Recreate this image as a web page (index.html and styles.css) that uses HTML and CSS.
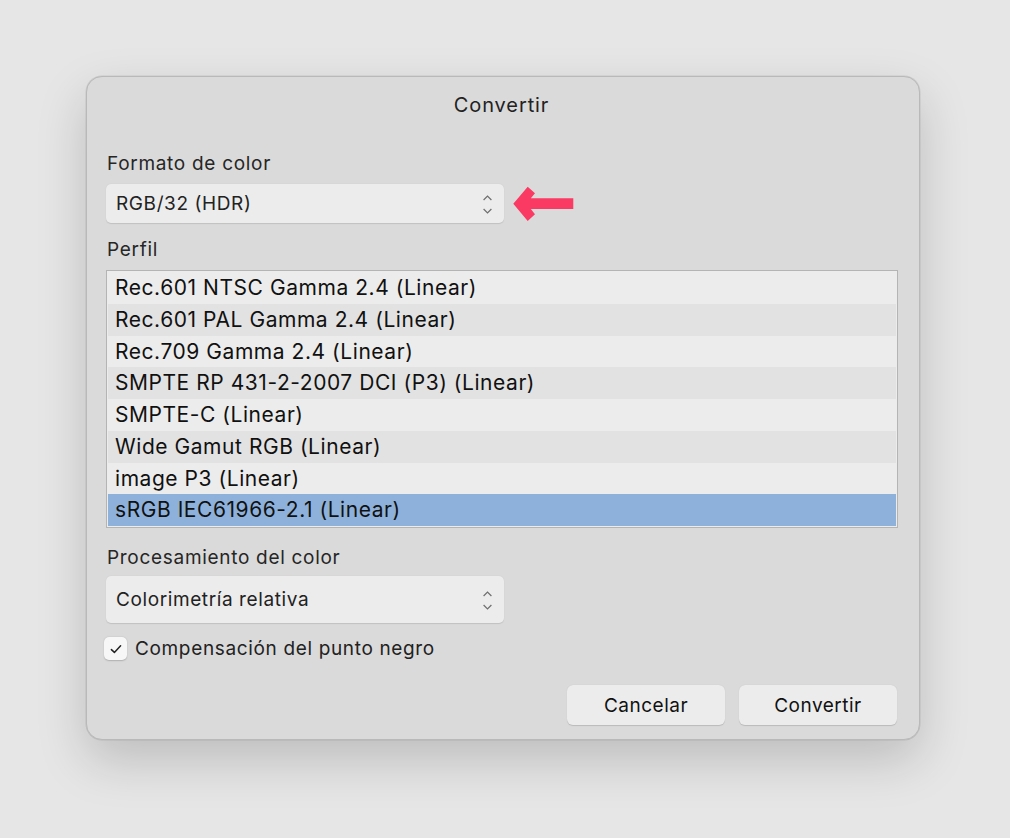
FILE: index.html
```html
<!DOCTYPE html>
<html lang="es">
<head>
  <meta charset="UTF-8">
  <title>Convertir</title>
  <link rel="stylesheet" href="styles.css">
</head>
<body>

  <div class="dialog">
    <h1 class="dialog-title">Convertir</h1>

    <div class="field-label">Formato de color</div>
    <div class="select-row">
      <div class="select">
        <span>RGB/32 (HDR)</span>
        <svg class="select-arrows" viewBox="0 0 9 19" width="9" height="19">
          <path d="M0.6 5 L4.5 1 L8.4 5 M0.6 14 L4.5 18 L8.4 14" fill="none" stroke="#6e6e6e" stroke-width="1.2"/>
        </svg>
      </div>
      <svg class="pointer" viewBox="0 0 64 38" width="64" height="38">
        <path d="M2.3 18.7 L16.7 1.7 L24 8.3 L19.8 13.3 L62.3 13.3 L62.3 24 L19.8 24 L24 29.3 L16.7 36 Z" fill="#fb3a64"/>
      </svg>
    </div>

    <div class="field-label label-list">Perfil</div>
    <ul class="profile-list">
      <li>Rec.601 NTSC Gamma 2.4 (Linear)</li>
      <li>Rec.601 PAL Gamma 2.4 (Linear)</li>
      <li>Rec.709 Gamma 2.4 (Linear)</li>
      <li>SMPTE RP 431-2-2007 DCI (P3) (Linear)</li>
      <li>SMPTE-C (Linear)</li>
      <li>Wide Gamut RGB (Linear)</li>
      <li>image P3 (Linear)</li>
      <li class="selected">sRGB IEC61966-2.1 (Linear)</li>
    </ul>

    <div class="field-label label-tight">Procesamiento del color</div>
    <div class="select select-tall">
      <span>Colorimetría relativa</span>
      <svg class="select-arrows" viewBox="0 0 9 19" width="9" height="19">
        <path d="M0.6 5 L4.5 1 L8.4 5 M0.6 14 L4.5 18 L8.4 14" fill="none" stroke="#6e6e6e" stroke-width="1.2"/>
      </svg>
    </div>

    <label class="check">
      <span class="check-box">
        <svg viewBox="0 0 14 14" width="14" height="14">
          <path d="M2.4 7.6 L5.4 10.4 L11.6 3.8" fill="none" stroke="#222" stroke-width="1.5" stroke-linecap="round" stroke-linejoin="round"/>
        </svg>
      </span>
      Compensación del punto negro
    </label>

    <div class="buttons">
      <button class="btn">Cancelar</button>
      <button class="btn">Convertir</button>
    </div>
  </div>

</body>
</html>
```

FILE: styles.css
```css
body {
  margin: 0;
  height: 838px;
  background: #e6e6e6;
  font-family: Inter, 'Liberation Sans', sans-serif;
  color: #222;
}

.dialog {
  position: absolute;
  left: 86px;
  top: 76px;
  width: 834px;
  height: 664px;
  box-sizing: border-box;
  background: #dadada;
  border: 1px solid #b9b9b9;
  border-radius: 16px;
  box-shadow: 0 20px 50px rgba(0, 0, 0, 0.18), 0 0 0 0.5px rgba(0, 0, 0, 0.1);
  padding: 16px 22px 0 19px;
}

.dialog-title {
  margin: 0 0 37px;
  text-align: center;
  font-size: 20px;
  font-weight: 400;
  letter-spacing: 0.9px;
  line-height: 24px;
  color: #222;
}

.field-label {
  font-size: 19px;
  letter-spacing: 0.7px;
  line-height: 20px;
  margin: 0 0 10px 1px;
  color: #262626;
}

.label-list {
  margin-bottom: 10px;
}

.label-tight {
  margin-bottom: 8px;
}

.select-row {
  display: flex;
  align-items: center;
  gap: 7px;
  margin-bottom: 17px;
}

.select {
  width: 398px;
  height: 39px;
  box-sizing: border-box;
  background: #ececec;
  border-radius: 5px;
  box-shadow: 0 0.5px 1px rgba(0, 0, 0, 0.12);
  display: flex;
  align-items: center;
  justify-content: space-between;
  padding: 0 12px 0 10px;
  font-size: 19px;
  letter-spacing: 0.6px;
}

.select-tall {
  height: 47px;
  margin-bottom: 14px;
}

.select-arrows {
  margin-top: 1px;
}

.pointer {
  display: block;
  flex-shrink: 0;
}

.profile-list {
  list-style: none;
  margin: 0 0 20px;
  padding: 1px;
  width: 792px;
  box-sizing: border-box;
  border: 1px solid #b4b4b4;
  background: #ececec;
}

.profile-list li {
  height: 31.75px;
  line-height: 31.75px;
  padding-left: 7px;
  font-size: 21px;
  letter-spacing: 0.55px;
  color: #111;
}

.profile-list li:nth-child(odd) {
  background: #ececec;
}

.profile-list li:nth-child(even) {
  background: #e2e2e2;
}

.profile-list li.selected {
  background: #8eb1db;
}

.check {
  display: flex;
  align-items: center;
  gap: 8px;
  font-size: 19px;
  letter-spacing: 0.65px;
  color: #222;
  margin-left: -2px;
}

.check-box {
  width: 23px;
  height: 23px;
  background: #f7f7f7;
  border-radius: 5px;
  box-shadow: 0 0.5px 1.5px rgba(0, 0, 0, 0.2);
  display: flex;
  align-items: center;
  justify-content: center;
}

.buttons {
  display: flex;
  justify-content: flex-end;
  gap: 14px;
  margin-top: 25px;
}

.btn {
  width: 158px;
  height: 40px;
  border: none;
  border-radius: 6px;
  background: #ececec;
  box-shadow: 0 0.5px 1px rgba(0, 0, 0, 0.15);
  font-family: inherit;
  font-size: 19px;
  letter-spacing: 0.5px;
  color: #111;
}
```
